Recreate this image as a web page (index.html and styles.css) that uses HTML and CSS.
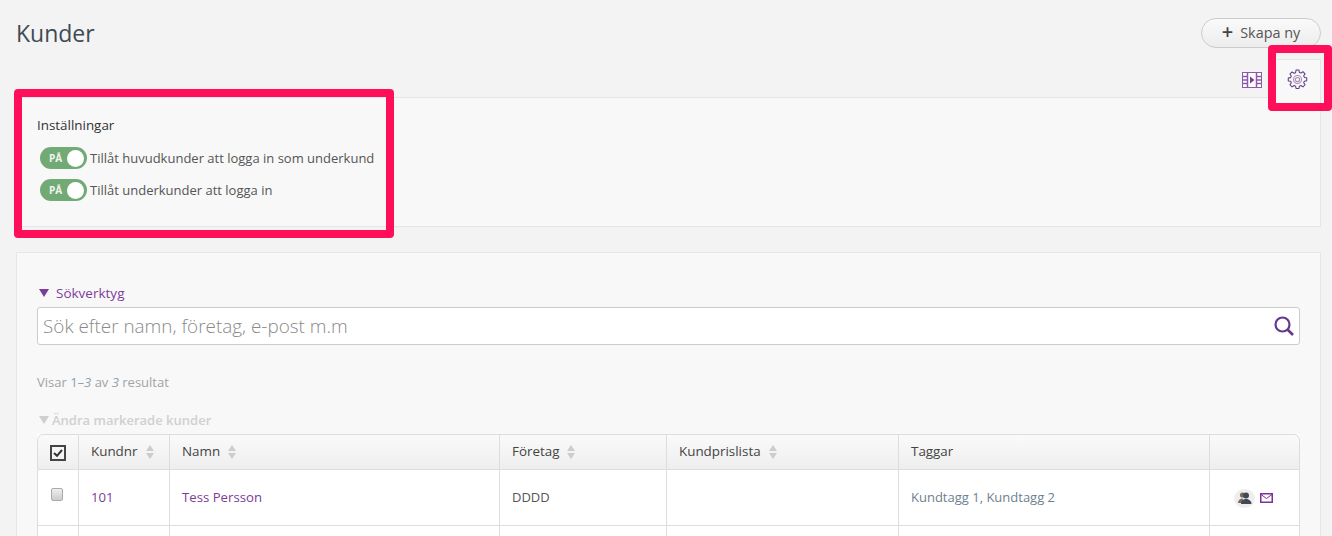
FILE: index.html
```html
<!DOCTYPE html>
<html lang="sv">
<head>
<meta charset="utf-8">
<title>Kunder</title>
<link rel="stylesheet" href="styles.css">
</head>
<body>
<div class="page">
  <header class="top">
    <h1 class="title">Kunder</h1>
    <button class="create"><span class="plus">+</span>Skapa ny</button>
  </header>
  <div class="tools">
    <svg class="film" width="20" height="16" viewBox="0 0 20 16"><rect x="0.5" y="0.5" width="19" height="15" fill="#fff" stroke="#8e5aa8"/><path d="M5.500 .5v15M14.500 .5v15M0.500 4.500h5M0.500 8h5M0.500 11.500h5M14.500 4.500h5M14.500 8h5M14.500 11.500h5" stroke="#8e5aa8" stroke-width="1.500" fill="none"/><path d="M8 4.500l4.500 3.500-4.500 3.500z" fill="#7d3c98"/></svg>
    <span class="gear-tab">
      <svg width="21" height="21" viewBox="0 0 20 20" fill="none" stroke="#5f3a85" stroke-width="1"><path d="M8.600 1h2.800l.4 2.300 1.500.6 1.900-1.300 2 2-1.300 1.900.6 1.500 2.300.4v2.800l-2.300.4-.6 1.500 1.300 1.900-2 2-1.900-1.300-1.500.6-.4 2.300H8.600l-.4-2.300-1.500-.6-1.900 1.300-2-2 1.300-1.900-.6-1.500L1.200 11.400V8.600l2.300-.4.6-1.500-1.300-1.900 2-2 1.900 1.300 1.500-.6z" stroke-linejoin="round"/><circle cx="10" cy="10" r="3.800" stroke="#a58ab2"/><circle cx="10" cy="10" r="2" stroke="#a58ab2"/></svg>
    </span>
  </div>
  <section class="panel settings">
    <h2 class="settings-title">Inställningar</h2>
    <div class="toggle-row"><span class="toggle"><span class="toggle-label">PÅ</span><span class="knob"></span></span><span>Tillåt huvudkunder att logga in som underkund</span></div>
    <div class="toggle-row"><span class="toggle"><span class="toggle-label">PÅ</span><span class="knob"></span></span><span>Tillåt underkunder att logga in</span></div>
  </section>
  <section class="panel customers">
    <div class="search-toggle"><span class="tri"></span>Sökverktyg</div>
    <div class="search">
      <span class="search-text">Sök efter namn, företag, e-post m.m</span>
      <svg width="22" height="22" viewBox="0 0 22 22" fill="none" stroke="#633a90"><circle cx="9.500" cy="9.500" r="7" stroke-width="2.200"/><path d="M14.500 14.500l5.500 5.500" stroke-width="2.600"/></svg>
    </div>
    <p class="result">Visar <span class="accent">1–<em>3</em></span> av <em class="accent">3</em> resultat</p>
    <div class="bulk"><span class="tri-grey"></span>Ändra markerade kunder</div>
    <div class="table-wrap">
      <table class="table">
        <colgroup><col class="c1"><col class="c2"><col class="c3"><col class="c4"><col class="c5"><col class="c6"><col class="c7"></colgroup>
        <thead>
          <tr>
            <th class="center"><span class="head-check"><svg width="10" height="8" viewBox="0 0 10 8" fill="none" stroke="#333" stroke-width="2"><path d="M1 4l3 2.800L9 1"/></svg></span></th>
            <th>Kundnr<span class="sort"></span></th>
            <th>Namn<span class="sort"></span></th>
            <th>Företag<span class="sort"></span></th>
            <th>Kundprislista<span class="sort"></span></th>
            <th>Taggar</th>
            <th></th>
          </tr>
        </thead>
        <tbody>
          <tr>
            <td class="center"><span class="check"></span></td>
            <td class="link">101</td>
            <td class="link">Tess Persson</td>
            <td>DDDD</td>
            <td></td>
            <td class="tags">Kundtagg 1, Kundtagg 2</td>
            <td class="actions">
              <span class="avatar"><svg width="16" height="14" viewBox="0 0 16 14"><circle cx="5.500" cy="4" r="2.600" fill="#7a6a60"/><path d="M1 12c0-3 2-4.500 5-4.500v4.500z" fill="#7a6a60"/><circle cx="9" cy="4.500" r="3" fill="#3f4a55"/><path d="M4 13c0-3.500 2.500-5 5-5s5.500 1.500 5.500 5z" fill="#3f4a55"/></svg></span>
              <svg class="mail" width="13" height="10" viewBox="0 0 13 10" fill="none" stroke="#7d2f9d"><rect x="0.750" y="0.750" width="11.500" height="8.500" stroke-width="1.500" fill="#fff"/><path d="M1 1.500l5.500 4 5.500-4" stroke-width="1"/></svg>
            </td>
          </tr>
          <tr class="next">
            <td></td><td></td><td></td><td></td><td></td><td></td><td></td>
          </tr>
        </tbody>
      </table>
    </div>
  </section>
  <div class="mark mark-settings"></div>
  <div class="mark mark-gear"></div>
</div>
</body>
</html>
```
FILE: styles.css
```css
* { box-sizing: border-box; }
html, body { margin: 0; height: 536px; overflow: hidden; }
body {
  background: #f3f3f3;
  font-family: "Open Sans", "Liberation Sans", sans-serif;
  font-size: 13px;
  color: #555;
}
.page { position: relative; padding: 0 11px 0 16px; height: 536px; overflow: hidden; }
.top { display: flex; justify-content: space-between; align-items: flex-start; height: 66px; padding-top: 18px; }
.title { margin: 0; font-size: 23px; font-weight: 400; line-height: 30px; color: #3f4a55; }
.create {
  width: 120px; height: 30px; padding: 0 0 2px;
  border: 1px solid #ccc; border-radius: 15px;
  background: linear-gradient(#fafafa, #ececec);
  font: 400 14.400px "Open Sans", sans-serif; color: #555;
  display: flex; align-items: center; justify-content: center;
}
.plus { font-size: 20px; font-weight: 600; line-height: 20px; margin-right: 7px; color: #444; }
.tools { display: flex; justify-content: flex-end; align-items: flex-start; height: 31px; }
.film { margin: 6px 11px 0 0; }
.gear-tab {
  position: relative; z-index: 1;
  width: 48px; height: 39px; margin-top: -7px; padding-top: 9px;
  display: flex; justify-content: center; align-items: flex-start;
  background: #f8f8f8; border: 1px solid #e6e6e6; border-bottom: 0;
}
.panel { background: #f8f8f8; border: 1px solid #e6e6e6; }
.settings { height: 130px; padding: 18px 20px 0; margin-bottom: 25px; }
.settings-title { margin: 0 0 8px; font-size: 13.400px; font-weight: 400; line-height: 18px; color: #333; }
.toggle-row { display: flex; align-items: center; height: 32px; padding-left: 3px; line-height: 18px; color: #555; font-size: 13px; }
.toggle {
  width: 47px; height: 22px; border-radius: 11px; background: #72aa76;
  display: flex; align-items: center; justify-content: space-between;
  padding: 0 3px 0 9px; margin-right: 3px; flex: none;
}
.toggle-label { font-size: 10px; font-weight: 700; color: #eef5ee; }
.knob { width: 17px; height: 17px; border-radius: 50%; background: #fff; }
.customers { height: 300px; padding: 31px 20px 0; }
.search-toggle { display: flex; align-items: center; height: 18px; color: #7d3c98; font-size: 13.500px; font-weight: 400; }
.tri { width: 0; height: 0; margin: 0 7px 0 2px; border-left: 5px solid transparent; border-right: 5px solid transparent; border-top: 8px solid #7d3c98; }
.search {
  display: flex; align-items: center; justify-content: space-between;
  height: 38px; margin-top: 5px; padding: 0 4px 0 5px;
  background: #fff; border: 1px solid #ccc; border-radius: 3px;
}
.search-text { font-size: 18.900px; color: #8a8a8a; font-weight: 300; }
.result { margin: 28px 0 0; font-size: 13px; line-height: 19px; color: #a3a3a3; }
.accent { color: #8d9fb0; }
.bulk { display: flex; align-items: center; height: 18px; margin-top: 19px; font-size: 13px; font-weight: 600; color: #d0d0d0; }
.tri-grey { width: 0; height: 0; margin: 0 3px 0 2px; border-left: 5px solid transparent; border-right: 5px solid transparent; border-top: 8px solid #cfcfcf; }
.table-wrap { margin-top: 5px; }
.table { width: 1263px; table-layout: fixed; border-collapse: separate; border-spacing: 0; background: #fff; }
.c1 { width: 42px; } .c2 { width: 91px; } .c3 { width: 330px; } .c4 { width: 167px; }
.c5 { width: 232px; } .c6 { width: 311px; } .c7 { width: 90px; }
.table th {
  height: 36px; padding: 0 12px 2px; text-align: left; font-size: 13.400px; font-weight: 400; color: #444;
  background: linear-gradient(#fafafa, #eee);
  border-top: 1px solid #ddd; border-right: 1px solid #ddd; border-bottom: 1px solid #ddd;
}
.table th:first-child { border-left: 1px solid #ddd; border-top-left-radius: 6px; }
.table th:last-child { border-top-right-radius: 6px; }
.table td { height: 56px; padding: 0 12px 2px; font-size: 13px; color: #555; border-right: 1px solid #ddd; border-bottom: 1px solid #ddd; }
.table td:first-child { border-left: 1px solid #ddd; }
.table th.center { padding: 0 1px 0 0; text-align: center; }
.table td.center { padding: 0 2px 0 0; text-align: center; }
.table td.link { color: #7d3c98; font-size: 13.200px; }
.table td.tags { color: #6e7f8f; }
.table td.actions { padding: 0 0 0 24px; }
.head-check { display: inline-flex; align-items: center; justify-content: center; width: 16px; height: 16px; border: 2px solid #444; vertical-align: middle; }
.check { display: inline-block; width: 12px; height: 13px; border: 1px solid #aaa; border-radius: 2px; background: linear-gradient(#eee, #ccc); vertical-align: 3px; }
.sort { display: inline-flex; flex-direction: column; justify-content: space-between; width: 9px; height: 14px; margin-left: 8px; vertical-align: middle; }
.sort::before, .sort::after { content: ""; width: 0; height: 0; border-left: 4.500px solid transparent; border-right: 4.500px solid transparent; }
.sort::before { border-bottom: 6px solid #ccc; }
.sort::after { border-top: 6px solid #ccc; }
.avatar { display: inline-flex; align-items: center; justify-content: center; width: 21px; height: 19px; border-radius: 50%; background: #eee; vertical-align: middle; margin-right: 2px; }
.mail { vertical-align: middle; }
.mark { position: absolute; z-index: 2; border: 8px solid #ff0f5a; border-radius: 4px; pointer-events: none; }
.mark-settings { left: 14px; top: 89px; width: 380px; height: 149px; }
.mark-gear { left: 1268px; top: 45px; width: 64px; height: 66px; }
```
